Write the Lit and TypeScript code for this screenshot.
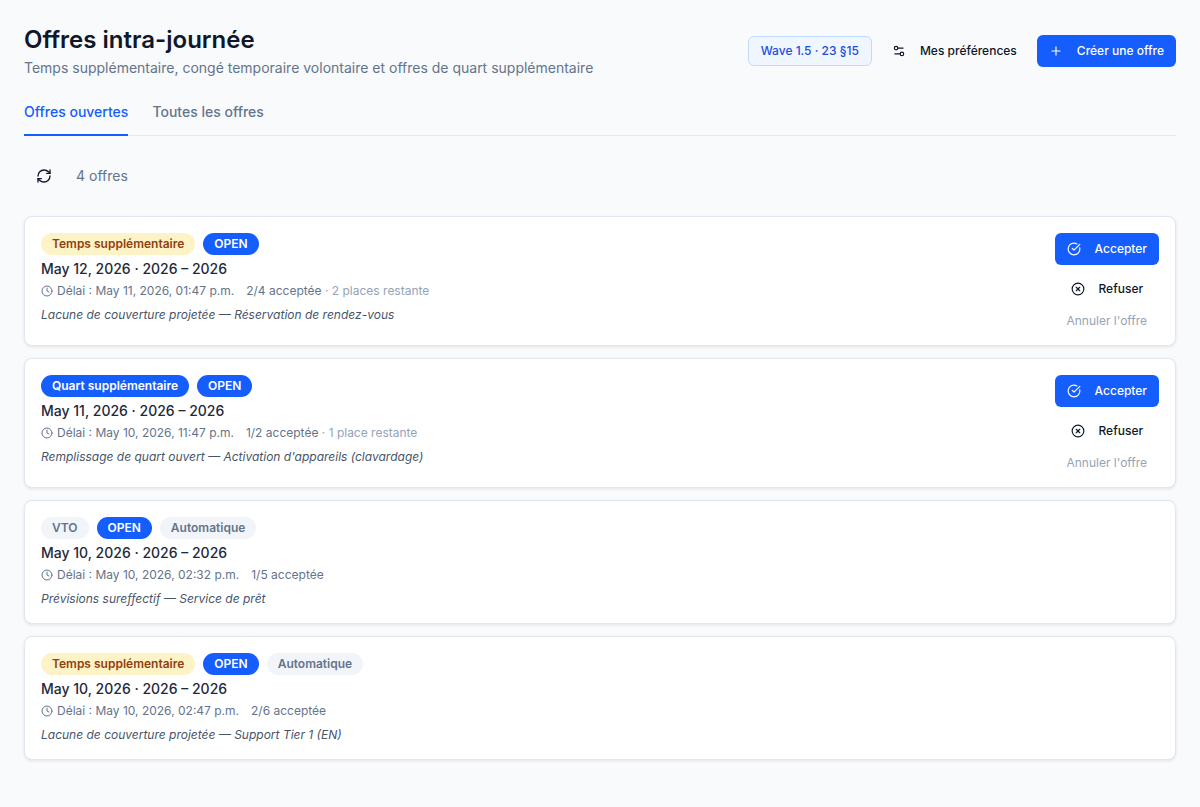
import { LitElement, html, css, svg } from 'lit'
import { customElement, state } from 'lit/decorators.js'

interface Offer {
  type: string
  typeClass: string
  auto?: boolean
  date: string
  deadline: string
  accepted: string
  remaining?: string
  note: string
  actions?: boolean
}

const OFFERS: Offer[] = [
  {
    type: 'Temps supplémentaire',
    typeClass: 'amber',
    date: 'May 12, 2026 · 2026 – 2026',
    deadline: 'Délai : May 11, 2026, 01:47 p.m.',
    accepted: '2/4 acceptée',
    remaining: '2 places restante',
    note: 'Lacune de couverture projetée — Réservation de rendez-vous',
    actions: true
  },
  {
    type: 'Quart supplémentaire',
    typeClass: 'blue',
    date: 'May 11, 2026 · 2026 – 2026',
    deadline: 'Délai : May 10, 2026, 11:47 p.m.',
    accepted: '1/2 acceptée',
    remaining: '1 place restante',
    note: "Remplissage de quart ouvert — Activation d'appareils (clavardage)",
    actions: true
  },
  {
    type: 'VTO',
    typeClass: 'gray',
    auto: true,
    date: 'May 10, 2026 · 2026 – 2026',
    deadline: 'Délai : May 10, 2026, 02:32 p.m.',
    accepted: '1/5 acceptée',
    note: 'Prévisions sureffectif — Service de prêt'
  },
  {
    type: 'Temps supplémentaire',
    typeClass: 'amber',
    auto: true,
    date: 'May 10, 2026 · 2026 – 2026',
    deadline: 'Délai : May 10, 2026, 02:47 p.m.',
    accepted: '2/6 acceptée',
    note: 'Lacune de couverture projetée — Support Tier 1 (EN)'
  }
]

const icon = (size: number, body: unknown) => html`
  <svg width=${size} height=${size} viewBox="0 0 24 24" fill="none" stroke="currentColor"
    stroke-width="2" stroke-linecap="round" stroke-linejoin="round">${body}</svg>
`

const clockIcon = svg`<circle cx="12" cy="12" r="10"></circle><path d="M12 6v6l4 2"></path>`
const checkIcon = svg`<path d="M21.8 10A10 10 0 1 1 17 3.3"></path><path d="m9 11 3 3L22 4"></path>`
const xIcon = svg`<circle cx="12" cy="12" r="10"></circle><path d="m15 9-6 6"></path><path d="m9 9 6 6"></path>`
const plusIcon = svg`<path d="M5 12h14"></path><path d="M12 5v14"></path>`
const prefsIcon = svg`<path d="M14 17H5"></path><path d="M19 7h-9"></path><circle cx="17" cy="17" r="3"></circle><circle cx="7" cy="7" r="3"></circle>`
const refreshIcon = svg`<path d="M3 12a9 9 0 0 1 9-9 9.75 9.75 0 0 1 6.74 2.74L21 8"></path><path d="M21 3v5h-5"></path><path d="M21 12a9 9 0 0 1-9 9 9.75 9.75 0 0 1-6.74-2.74L3 16"></path><path d="M8 16H3v5"></path>`

@customElement('app-root')
export class AppRoot extends LitElement {
  static styles = css`
    :host {
      display: block;
      min-height: 807px;
      background: #f8fafc;
      font-family: Inter, 'Liberation Sans', sans-serif;
      color: #0f172a;
      box-sizing: border-box;
      padding: 24px;
    }

    .header {
      display: flex;
      justify-content: space-between;
      align-items: flex-start;
      margin-bottom: 16px;
    }

    h1 {
      margin: 0;
      font-size: 24px;
      line-height: 32px;
      font-weight: 600;
      color: #0f172a;
    }

    .subtitle {
      margin: 2px 0 0;
      font-size: 14px;
      line-height: 20px;
      color: #64748b;
    }

    .header-actions {
      display: flex;
      align-items: center;
      gap: 8px;
      padding-top: 11px;
    }

    .wave {
      display: flex;
      align-items: center;
      height: 30px;
      box-sizing: border-box;
      padding: 0 12px 1px;
      border: 1px solid #bfdbfe;
      border-radius: 6px;
      background: #eff6ff;
      color: #1d4ed8;
      font-size: 12px;
      font-weight: 500;
    }

    button {
      display: inline-flex;
      align-items: center;
      justify-content: center;
      gap: 14px;
      height: 32px;
      padding: 0 12px;
      border: none;
      border-radius: 6px;
      background: transparent;
      font-family: inherit;
      font-size: 12px;
      font-weight: 500;
      line-height: 16px;
      cursor: pointer;
      white-space: nowrap;
    }

    .primary {
      background: #155dfc;
      color: #ffffff;
    }

    .ghost {
      color: #0f172a;
    }

    .muted {
      color: #94a3b8;
      font-weight: 400;
    }

    .tabs {
      display: flex;
      gap: 24px;
      border-bottom: 1px solid #e2e8f0;
      margin-bottom: 24px;
    }

    .tab {
      padding: 8px 0 12px;
      font-size: 14px;
      line-height: 20px;
      font-weight: 500;
      color: #64748b;
      margin-bottom: -1px;
      border-bottom: 2px solid transparent;
    }

    .tab.active {
      color: #155dfc;
      border-bottom-color: #155dfc;
    }

    .toolbar {
      display: flex;
      align-items: center;
      gap: 12px;
      height: 32px;
      margin-bottom: 24px;
      font-size: 14px;
      line-height: 18px;
      color: #64748b;
    }

    .toolbar span {
      padding-bottom: 1px;
    }

    .icon-btn {
      width: 40px;
      height: 32px;
      padding: 0;
      color: #0f172a;
    }

    .list {
      display: flex;
      flex-direction: column;
      gap: 12px;
    }

    .card {
      display: flex;
      justify-content: space-between;
      align-items: flex-start;
      padding: 16px;
      background: #ffffff;
      border: 1px solid #e2e8f0;
      border-radius: 8px;
      box-shadow: 0 1px 3px rgba(15, 23, 42, 0.1);
    }

    .chips {
      display: flex;
      gap: 8px;
      margin-bottom: 4px;
    }

    .chip {
      display: flex;
      align-items: center;
      height: 22px;
      box-sizing: border-box;
      padding: 0 11px 1px;
      border-radius: 11px;
      font-size: 12px;
      font-weight: 600;
    }

    .amber {
      background: #fef3c7;
      color: #92400e;
    }

    .blue {
      background: #155dfc;
      color: #ffffff;
    }

    .gray {
      background: #f1f5f9;
      color: #64748b;
    }

    .date {
      font-size: 14px;
      line-height: 20px;
      font-weight: 500;
      color: #1e293b;
      margin-bottom: 2px;
    }

    .meta {
      display: flex;
      align-items: center;
      font-size: 12px;
      line-height: 20px;
      color: #64748b;
      margin-bottom: 4px;
    }

    .meta svg {
      margin-right: 4px;
    }

    .meta .accepted {
      margin-left: 12px;
    }

    .meta .remaining {
      color: #94a3b8;
      white-space: pre;
    }

    .note {
      font-size: 12px;
      line-height: 16px;
      font-style: italic;
      color: #475569;
      margin-top: 6px;
    }

    .actions {
      display: flex;
      flex-direction: column;
      align-items: center;
      gap: 8px;
    }

    .actions .cancel {
      height: 16px;
      padding: 0;
    }
  `

  @state()
  private offers = OFFERS

  private renderOffer(offer: Offer) {
    return html`
      <div class="card">
        <div>
          <div class="chips">
            <span class="chip ${offer.typeClass}">${offer.type}</span>
            <span class="chip blue">OPEN</span>
            ${offer.auto ? html`<span class="chip gray">Automatique</span>` : ''}
          </div>
          <div class="date">${offer.date}</div>
          <div class="meta">
            ${icon(12, clockIcon)}
            <span>${offer.deadline}</span>
            <span class="accepted">${offer.accepted}</span>
            ${offer.remaining ? html`<span class="remaining"> · ${offer.remaining}</span>` : ''}
          </div>
          <div class="note">${offer.note}</div>
        </div>
        ${offer.actions ? html`
          <div class="actions">
            <button class="primary">${icon(14, checkIcon)}Accepter</button>
            <button class="ghost">${icon(14, xIcon)}Refuser</button>
            <button class="cancel muted">Annuler l'offre</button>
          </div>
        ` : ''}
      </div>
    `
  }

  render() {
    return html`
      <div class="header">
        <div>
          <h1>Offres intra-journée</h1>
          <p class="subtitle">Temps supplémentaire, congé temporaire volontaire et offres de quart supplémentaire</p>
        </div>
        <div class="header-actions">
          <span class="wave">Wave 1.5 · 23 §15</span>
          <button class="ghost">${icon(14, prefsIcon)}Mes préférences</button>
          <button class="primary">${icon(14, plusIcon)}Créer une offre</button>
        </div>
      </div>
      <div class="tabs">
        <div class="tab active">Offres ouvertes</div>
        <div class="tab">Toutes les offres</div>
      </div>
      <div class="toolbar">
        <button class="icon-btn">${icon(16, refreshIcon)}</button>
        <span>4 offres</span>
      </div>
      <div class="list">
        ${this.offers.map(offer => this.renderOffer(offer))}
      </div>
    `
  }
}
